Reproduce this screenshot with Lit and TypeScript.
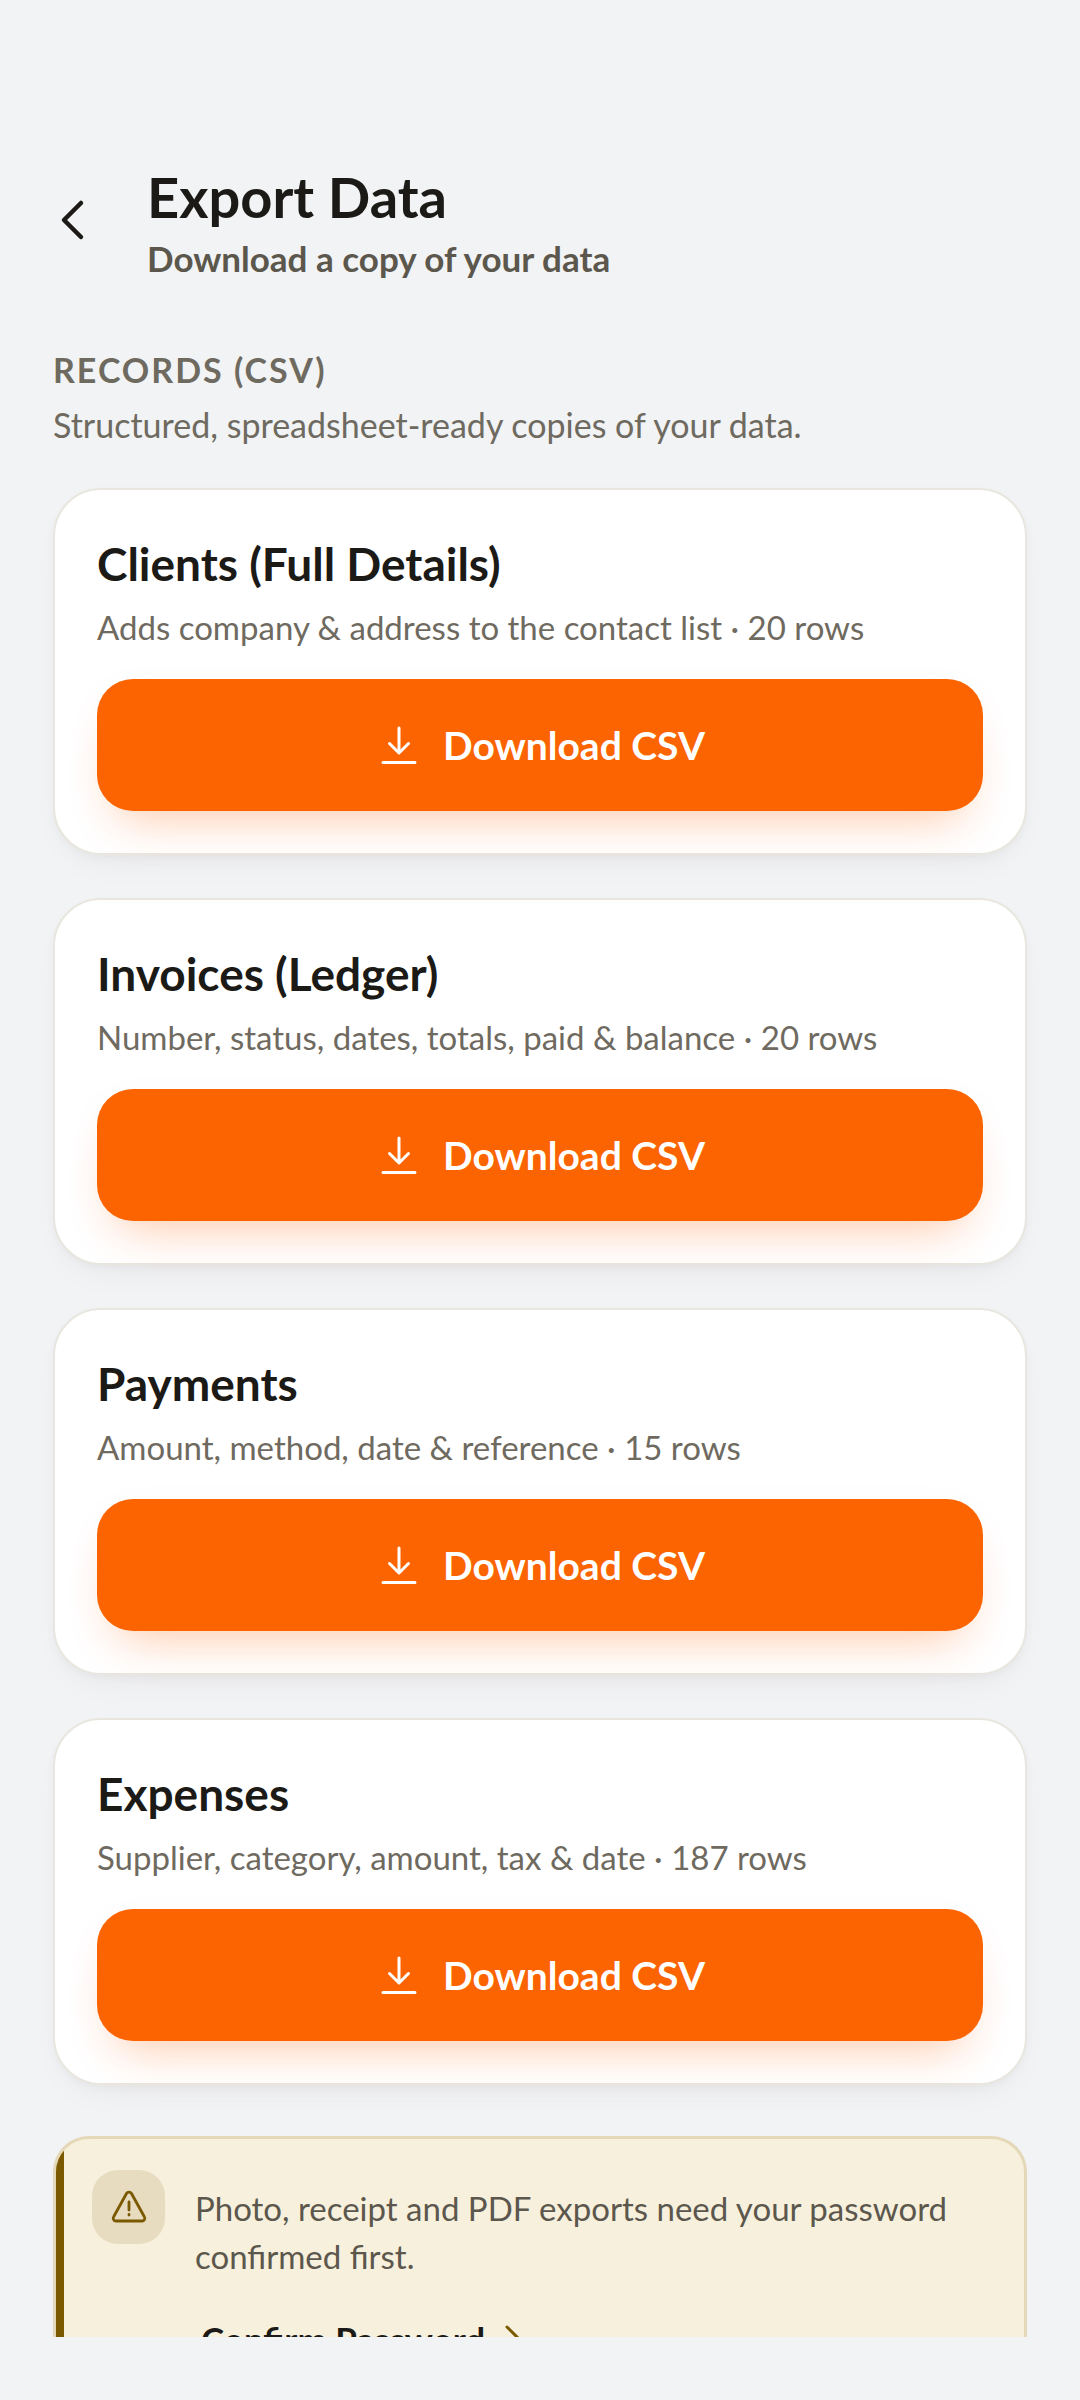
import { LitElement, html, css, svg } from 'lit';
import { customElement, property } from 'lit/decorators.js';

const records = [
  { title: 'Clients (Full Details)', detail: 'Adds company & address to the contact list', rows: 20 },
  { title: 'Invoices (Ledger)', detail: 'Number, status, dates, totals, paid & balance', rows: 20 },
  { title: 'Payments', detail: 'Amount, method, date & reference', rows: 15 },
  { title: 'Expenses', detail: 'Supplier, category, amount, tax & date', rows: 187 },
];

const icons = {
  back: svg`<path d="M29 7 12 24l17 17" stroke-width="4.5" />`,
  download: svg`<path d="M24 7v24M14.5 22.5 24 32l9.5-9.500M8 41.5h32" stroke-width="3" />`,
  warning: svg`<path d="M21.5 10.5 8.800 33.5a2.800 2.800 0 0 0 2.500 4.500h25.400a2.800 2.800 0 0 0 2.500-4.500L26.500 10.500a2.900 2.900 0 0 0-5 0ZM24 19v8M24 31.500v.500" stroke-width="2.800" />`,
  forward: svg`<path d="M18 12 30 24 18 36" stroke-width="3" />`,
};

const icon = (name: keyof typeof icons) => html`
  <svg class="icon" viewBox="0 0 48 48" aria-hidden="true">${icons[name]}</svg>
`;

const shared = css`
  * {
    box-sizing: border-box;
    margin: 0;
  }
  button {
    font: inherit;
    border: 0;
    padding: 0;
    background: none;
    color: inherit;
    cursor: pointer;
  }
  .icon {
    display: block;
    flex: none;
    width: 48px;
    height: 48px;
    fill: none;
    stroke: currentColor;
    stroke-linecap: round;
    stroke-linejoin: round;
  }
`;

@customElement('export-card')
class ExportCard extends LitElement {
  @property() heading = '';
  @property() detail = '';
  @property({ type: Number }) rows = 0;

  static styles = [shared, css`
    :host {
      display: block;
    }
    .card {
      padding: 42px;
      border: 2px solid #e9e6df;
      border-radius: 48px;
      background: #fff;
      box-shadow: 0 3px 8px rgba(28, 26, 22, 0.03), 0 16px 36px -14px rgba(60, 30, 16, 0.06);
    }
    .title {
      font-size: 46px;
      line-height: 64px;
      font-weight: 700;
      color: #1c1a16;
    }
    .detail {
      margin-top: 7px;
      font-size: 33px;
      line-height: 48px;
      color: #6f6a5f;
    }
    .download {
      display: flex;
      align-items: center;
      justify-content: center;
      gap: 20px;
      width: 100%;
      height: 132px;
      margin-top: 28px;
      border-radius: 36px;
      background: #fb6400;
      box-shadow: 0 28px 48px -22px rgba(251, 100, 0, 0.32), 0 10px 40px rgba(251, 100, 0, 0.03);
      color: #fff;
      font-size: 39px;
      font-weight: 700;
    }
  `];

  render() {
    return html`
      <article class="card">
        <h3 class="title">${this.heading}</h3>
        <p class="detail">${this.detail} · ${this.rows} rows</p>
        <button class="download">${icon('download')}<span>Download CSV</span></button>
      </article>
    `;
  }
}

@customElement('app-root')
class AppRoot extends LitElement {
  static styles = [shared, css`
    :host {
      display: flex;
      flex-direction: column;
      height: 100vh;
      box-sizing: border-box;
      padding: 159px 0 63px;
      background: #f1f3f5;
      font-family: Lato, 'Open Sans', sans-serif;
      color: #1c1a16;
    }
    .header {
      display: flex;
      align-items: center;
      gap: 47px;
      padding: 0 52px;
    }
    .page-title {
      font-size: 56px;
      line-height: 76px;
      font-weight: 700;
    }
    .page-subtitle {
      font-size: 35px;
      line-height: 46px;
      font-weight: 700;
      color: #5c574d;
    }
    .content {
      flex: 1;
      min-height: 0;
      padding: 65px 53px;
      overflow-y: auto;
      scrollbar-width: none;
    }
    .section-title {
      font-size: 34px;
      line-height: 48px;
      font-weight: 700;
      letter-spacing: 2px;
      text-transform: uppercase;
      color: #6f6a5f;
    }
    .section-text {
      margin-top: 7px;
      font-size: 34px;
      line-height: 48px;
      color: #6f6a5f;
    }
    .cards {
      display: grid;
      gap: 43px;
      margin-top: 39px;
    }
    .notice {
      display: flex;
      gap: 30px;
      margin-top: 51px;
      padding: 31px 40px 40px 36px;
      border: 3px solid #e4d8b8;
      border-radius: 36px;
      background: linear-gradient(to right, #7a5900 8px, #f7f0dc 8px);
    }
    .badge {
      display: grid;
      place-items: center;
      flex: none;
      width: 73px;
      height: 74px;
      border-radius: 26px;
      background: #e7dcc0;
      color: #7a5900;
    }
    .notice-body {
      padding-top: 14px;
    }
    .notice-text {
      font-size: 33px;
      line-height: 48px;
      color: #5c574d;
    }
    .confirm {
      display: flex;
      align-items: center;
      gap: 4px;
      margin-top: 35px;
      padding: 0 6px;
      font-size: 35px;
      line-height: 48px;
      font-weight: 700;
      color: #1c1a16;
    }
    .confirm .icon {
      color: #7a5900;
    }
  `];

  render() {
    return html`
      <header class="header">
        <button class="back" aria-label="Back">${icon('back')}</button>
        <div>
          <h1 class="page-title">Export Data</h1>
          <p class="page-subtitle">Download a copy of your data</p>
        </div>
      </header>
      <main class="content">
        <h2 class="section-title">Records (CSV)</h2>
        <p class="section-text">Structured, spreadsheet-ready copies of your data.</p>
        <div class="cards">
          ${records.map((record) => html`
            <export-card .heading=${record.title} .detail=${record.detail} .rows=${record.rows}></export-card>
          `)}
        </div>
        <aside class="notice">
          <div class="badge">${icon('warning')}</div>
          <div class="notice-body">
            <p class="notice-text">Photo, receipt and PDF exports need your password confirmed first.</p>
            <button class="confirm"><span>Confirm Password</span>${icon('forward')}</button>
          </div>
        </aside>
      </main>
    `;
  }
}
